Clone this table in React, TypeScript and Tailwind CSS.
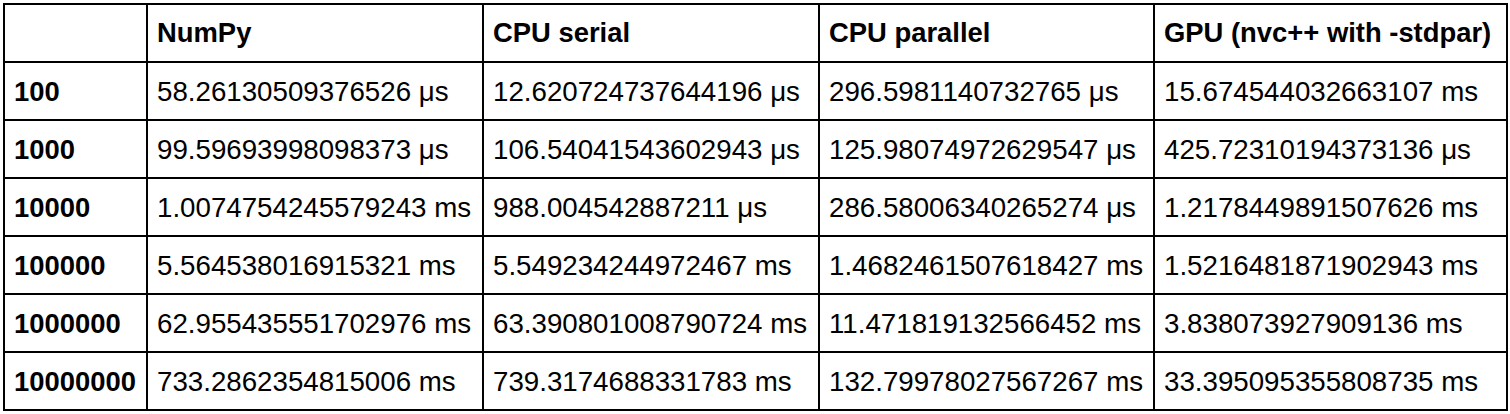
import React from "react";

const headers = ["", "NumPy", "CPU serial", "CPU parallel", "GPU (nvc++ with -stdpar)"];
const rows: string[][] = [
  ["100", "58.26130509376526 μs", "12.620724737644196 μs", "296.5981140732765 μs", "15.674544032663107 ms"],
  ["1000", "99.59693998098373 μs", "106.54041543602943 μs", "125.98074972629547 μs", "425.72310194373136 μs"],
  ["10000", "1.0074754245579243 ms", "988.004542887211 μs", "286.58006340265274 μs", "1.2178449891507626 ms"],
  ["100000", "5.564538016915321 ms", "5.549234244972467 ms", "1.4682461507618427 ms", "1.5216481871902943 ms"],
  ["1000000", "62.955435551702976 ms", "63.390801008790724 ms", "11.471819132566452 ms", "3.838073927909136 ms"],
  ["10000000", "733.2862354815006 ms", "739.3174688331783 ms", "132.79978027567267 ms", "33.395095355808735 ms"],
];

export default function App() {
  return (
    <div className="w-[1510px] h-[414px] bg-white pt-[3px] pl-[3px]" style={{ fontFamily: '"Liberation Sans", Arial, sans-serif' }}>
      <table className="border-collapse table-fixed w-[1503px] text-[27.7px] text-black leading-none">
        <colgroup>
          <col className="w-[143px]" />
          <col className="w-[336px]" />
          <col className="w-[336px]" />
          <col className="w-[335px]" />
          <col className="w-[353px]" />
        </colgroup>
        <thead>
          <tr className="h-[58px]">
            {headers.map((h, i) => (
              <th key={i} className="border-2 border-black text-left font-bold text-[27.4px] pl-[9px] pr-0 py-0 whitespace-nowrap">
                {h}
              </th>
            ))}
          </tr>
        </thead>
        <tbody>
          {rows.map((r, ri) => (
            <tr key={ri} className="h-[58px]">
              {r.map((c, ci) => (
                <td
                  key={ci}
                  className={`border-2 border-black text-left pl-[9px] pr-0 pt-[2px] pb-0 whitespace-nowrap ${ci === 0 ? "font-bold text-[27.4px]" : "font-normal"}`}
                >
                  {c}
                </td>
              ))}
            </tr>
          ))}
        </tbody>
      </table>
    </div>
  );
}
